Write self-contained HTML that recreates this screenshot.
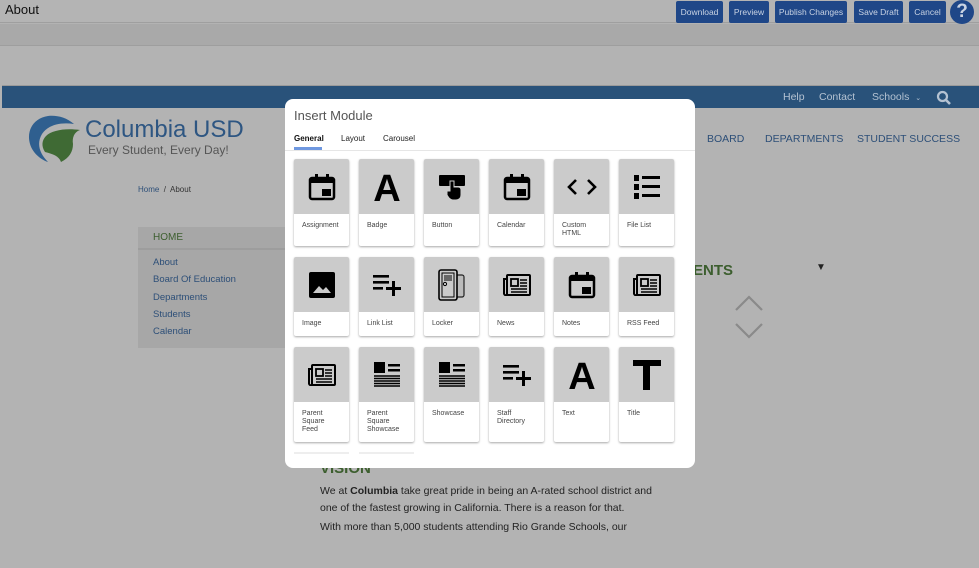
<!DOCTYPE html>
<html><head><meta charset="utf-8">
<style>
*{margin:0;padding:0;box-sizing:border-box}
body{width:979px;height:568px;overflow:hidden;background:#b3b3b3;font-family:"Liberation Sans",sans-serif;position:relative}
.a{position:absolute}
.btn{position:absolute;top:1px;height:22px;background:#1f4788;color:#c9d3e3;font-size:8.5px;line-height:22px;text-align:center;border-radius:2px}
.card{position:absolute;width:55px;background:#fff;box-shadow:0 1px 2px rgba(0,0,0,.35);border-radius:2px;overflow:hidden}
.card .ic{height:55px;background:#cbcbcb;display:flex;align-items:center;justify-content:center}
.card .lb{font-size:7px;color:#444;padding:8px 8px 0 8px;line-height:8px}
</style></head><body>
<div class="a" style="left:0;top:0;width:979px;height:23px;background:#b4b4b4;border-bottom:1px solid #9f9f9f"></div>
<div class="a" style="left:5px;top:2px;font-size:13px;color:#111">About</div>
<div class="btn" style="left:676px;width:47px">Download</div>
<div class="btn" style="left:729px;width:40px">Preview</div>
<div class="btn" style="left:775px;width:72px">Publish Changes</div>
<div class="btn" style="left:854px;width:49px">Save Draft</div>
<div class="btn" style="left:909px;width:37px">Cancel</div>
<div class="a" style="left:950px;top:0;width:24px;height:24px;border-radius:50%;background:#1f4788;color:#c9d3e3;font-weight:bold;font-size:19px;line-height:24px;text-align:center">?</div>
<div class="a" style="left:0;top:24px;width:979px;height:22px;background:#a9a9a9;border-bottom:1px solid #9e9e9e"></div>
<div class="a" style="left:2px;top:85px;width:977px;height:23px;background:#29527a;border-top:1px solid #9a9a9a"></div>
<div class="a" style="left:783px;top:91px;font-size:10.5px;color:#b4c2d2">Help</div>
<div class="a" style="left:819px;top:91px;font-size:10.5px;color:#b4c2d2">Contact</div>
<div class="a" style="left:872px;top:91px;font-size:10.5px;color:#b4c2d2">Schools &nbsp;<span style="font-size:7px">⌄</span></div>
<svg class="a" style="left:936px;top:90px" width="16" height="16" viewBox="0 0 16 16"><circle cx="6.5" cy="6.5" r="4.5" fill="none" stroke="#b4c2d2" stroke-width="2.2"/><path d="M10 10l4 4" stroke="#b4c2d2" stroke-width="2.6"/></svg>
<svg class="a" style="left:26px;top:114px" width="58" height="50" viewBox="0 0 58 50"><path d="M22 2C8 4 0 16 4 30c3 10 12 16 18 18C14 40 10 30 16 20c6-9 18-12 32-10C40 3 30 1 22 2z" fill="#2f5f8f"/><path d="M20 22c6-6 20-8 34-6-6 2-8 8-7 14 0 8-4 14-12 18-2-6-8-8-16-10-4-6-3-12 1-16z" fill="#3f6a34"/></svg>
<div class="a" style="left:85px;top:116px;font-size:24px;color:#2e5682">Columbia USD</div>
<div class="a" style="left:88px;top:143px;font-size:12px;color:#555">Every Student, Every Day!</div>
<div class="a" style="left:707px;top:133px;font-size:10.5px;color:#2d4f78">BOARD</div>
<div class="a" style="left:765px;top:133px;font-size:10.5px;color:#2d4f78">DEPARTMENTS</div>
<div class="a" style="left:857px;top:133px;font-size:10.5px;color:#2d4f78">STUDENT SUCCESS</div>
<div class="a" style="left:138px;top:185px;font-size:8px;color:#333"><span style="color:#2d4f78">Home</span> &nbsp;/&nbsp; About</div>
<div class="a" style="left:138px;top:227px;width:150px;height:121px;background:#a7a7a7"></div>
<div class="a" style="left:138px;top:248px;width:150px;height:2px;background:#9d9d9d"></div>
<div class="a" style="left:153px;top:232px;font-size:10px;color:#3c5e2e">HOME</div>
<div class="a" style="left:153px;top:254px;font-size:9.5px;color:#2d4f78;line-height:17.3px">About<br>Board Of Education<br>Departments<br>Students<br>Calendar</div>
<div class="a" style="left:693px;top:262px;font-size:15px;color:#3c5e2e;font-weight:bold">ENTS</div>
<div class="a" style="left:816px;top:262px;font-size:10px;color:#222">▼</div>
<svg class="a" style="left:734px;top:294px" width="30" height="46" viewBox="0 0 30 46"><path d="M2 16L15 3l13 13M2 30l13 13 13-13" fill="none" stroke="#8a8a8a" stroke-width="2.2"/></svg>
<div class="a" style="left:320px;top:460px;font-size:15px;color:#3c5e2e;font-weight:bold">VISION</div>
<div class="a" style="left:320px;top:483px;width:340px;font-size:10.5px;color:#222;line-height:17px">We at <b>Columbia</b> take great pride in being an A-rated school district and one of the fastest growing in California. There is a reason for that.</div>
<div class="a" style="left:320px;top:521px;font-size:10.5px;color:#222">With more than 5,000 students attending Rio Grande Schools, our</div>
<div class="a" style="left:285px;top:99px;width:410px;height:369px;background:#fff;border-radius:8px;overflow:hidden">
  <div class="a" style="left:9px;top:9px;font-size:13px;color:#555">Insert Module</div>
  <div class="a" style="left:9px;top:35px;font-size:8px;color:#111;font-weight:bold">General</div>
  <div class="a" style="left:56px;top:35px;font-size:8px;color:#222">Layout</div>
  <div class="a" style="left:98px;top:35px;font-size:8px;color:#222">Carousel</div>
  <div class="a" style="left:9px;top:48px;width:28px;height:3px;background:#6f98e0"></div>
  <div class="a" style="left:0;top:51px;width:410px;height:1px;background:#e6e6e6"></div>
</div>
<div id="cards"></div>
<script>
const I={
cal:'<svg width="28" height="28" viewBox="0 0 28 28"><rect x="2" y="5" width="24" height="21" rx="2" fill="none" stroke="#000" stroke-width="2.5"/><rect x="2" y="5" width="24" height="5" fill="#000"/><rect x="7" y="1" width="3" height="7" fill="#000"/><rect x="18" y="1" width="3" height="7" fill="#000"/><rect x="14" y="16" width="9" height="7" fill="#000"/></svg>',
A:'<svg width="30" height="32" viewBox="0 0 30 32"><text x="15" y="30" text-anchor="middle" font-family="Liberation Sans" font-weight="bold" font-size="38" fill="#000">A</text></svg>',
btn:'<svg width="28" height="28" viewBox="0 0 28 28"><rect x="1" y="2" width="26" height="11" rx="1" fill="#000"/><path d="M12 8h4v6h4c2 0 3 1 3 3v5c0 3-2 5-5 5h-3c-2 0-3-1-4-2l-2-3v-4h3z" fill="#000" stroke="#cbcbcb" stroke-width="1"/></svg>',
code:'<svg width="30" height="20" viewBox="0 0 30 20"><path d="M9 3L2 10l7 7M21 3l7 7-7 7" fill="none" stroke="#000" stroke-width="2.6"/></svg>',
fl:'<svg width="28" height="28" viewBox="0 0 28 28"><rect x="1" y="2" width="5" height="6" fill="#000"/><rect x="1" y="11" width="5" height="6" fill="#000"/><rect x="1" y="20" width="5" height="6" fill="#000"/><rect x="9" y="3" width="18" height="3" fill="#000"/><rect x="9" y="12" width="18" height="3" fill="#000"/><rect x="9" y="21" width="18" height="3" fill="#000"/></svg>',
img:'<svg width="28" height="28" viewBox="0 0 28 28"><rect x="1" y="1" width="26" height="26" rx="2" fill="#000"/><path d="M5 22l6-7 4 4 3-3 5 6z" fill="#cbcbcb"/></svg>',
ll:'<svg width="30" height="24" viewBox="0 0 30 24"><rect x="1" y="2" width="16" height="2.6" fill="#000"/><rect x="1" y="8" width="16" height="2.6" fill="#000"/><rect x="1" y="14" width="10" height="2.6" fill="#000"/><rect x="20" y="8" width="3" height="15" fill="#000"/><rect x="14" y="14" width="15" height="3" fill="#000"/></svg>',
lock:'<svg width="32" height="32" viewBox="0 0 32 32"><rect x="14" y="6" width="14" height="22" rx="2" fill="#bbb" stroke="#222" stroke-width="1.2"/><rect x="3" y="1" width="18" height="30" rx="2" fill="#cbcbcb" stroke="#000" stroke-width="1.6"/><rect x="6" y="4" width="12" height="24" fill="none" stroke="#000" stroke-width="1"/><path d="M8 7h8M8 9h8M8 11h8" stroke="#000"/><circle cx="9" cy="15" r="1.6" fill="none" stroke="#000"/></svg>',
news:'<svg width="28" height="22" viewBox="0 0 28 22"><rect x="4" y="1" width="23" height="20" rx="1" fill="none" stroke="#000" stroke-width="2"/><path d="M4 5H1v14a2 2 0 0 0 3 2" fill="none" stroke="#000" stroke-width="2"/><rect x="8" y="5" width="7" height="7" fill="none" stroke="#000" stroke-width="1.8"/><path d="M17 6h7M17 9h7M17 12h7M8 15h16M8 18h16" stroke="#000" stroke-width="1.6"/></svg>',
sc:'<svg width="28" height="28" viewBox="0 0 28 28"><rect x="1" y="1" width="11" height="11" fill="#000"/><rect x="15" y="3" width="12" height="2.5" fill="#000"/><rect x="15" y="8" width="12" height="2.5" fill="#000"/><path d="M1 15h26M1 17.5h26M1 20h26M1 22.5h26M1 25h26" stroke="#000" stroke-width="1.6"/></svg>',
T:'<svg width="30" height="32" viewBox="0 0 30 32"><rect x="1" y="1" width="28" height="6" fill="#000"/><rect x="11" y="1" width="7" height="30" fill="#000"/></svg>'
};
const rows=[[159,87,[['cal','Assignment'],['A','Badge'],['btn','Button'],['cal','Calendar'],['code','Custom HTML'],['fl','File List']]],
[257,79,[['img','Image'],['ll','Link List'],['lock','Locker'],['news','News'],['cal','Notes'],['news','RSS Feed']]],
[347,95,[['news','Parent Square Feed'],['sc','Parent Square Showcase'],['sc','Showcase'],['ll','Staff Directory'],['A','Text'],['T','Title']]]];
let h='';
rows.forEach(([y,ht,cs])=>cs.forEach(([ic,lb],i)=>{
 let l=lb.replace('Custom HTML','Custom<br>HTML').replace('Parent Square ','Parent<br>Square<br>').replace('Staff Directory','Staff<br>Directory');
 h+=`<div class="card" style="left:${294+i*65}px;top:${y}px;height:${ht}px"><div class="ic">${I[ic]}</div><div class="lb">${l}</div></div>`;
}));
h+='<div class="a" style="left:294px;top:452px;width:55px;height:2px;background:#eee"></div><div class="a" style="left:359px;top:452px;width:55px;height:2px;background:#eee"></div>';
document.getElementById('cards').innerHTML=h;
</script>
</body></html>
